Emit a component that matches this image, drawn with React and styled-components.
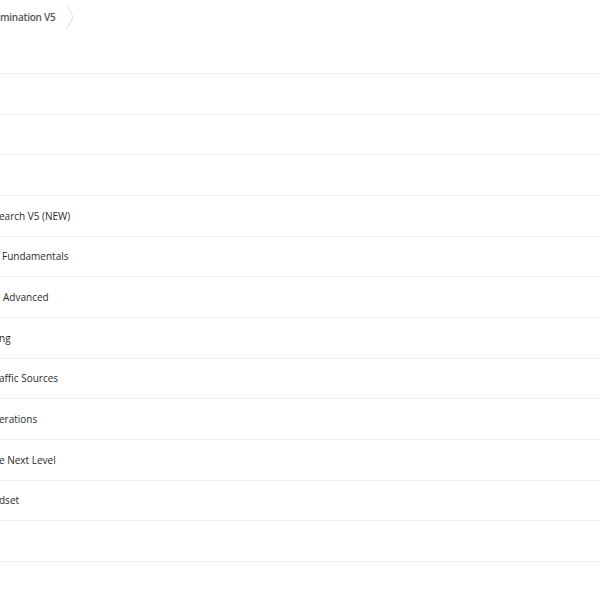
import React from 'react';
import styled, { createGlobalStyle } from 'styled-components'

const Global = createGlobalStyle`
body {
  margin: 0;
  background: #fff;
  font-family: "Open Sans", "Liberation Sans", sans-serif;
}
`

const Page = styled.div`
width: 600px;
height: 600px;
overflow: hidden;
background: #fff;
`

const Header = styled.header`
height: 73px;
display: flex;
align-items: flex-start;
`

const Crumb = styled.div`
display: flex;
align-items: center;
height: 34px;
gap: 11px;
font-size: 10px;
font-weight: 600;
letter-spacing: -0.25px;
color: #555;
`

const Chevron = styled.svg`
width: 8px;
height: 26px;
margin-top: -1px;
`

const List = styled.ul`
list-style: none;
margin: 0;
padding: 0;
border-bottom: 1px solid #ededed;
`

const Row = styled.li`
box-sizing: border-box;
height: 40.67px;
border-top: 1px solid #ededed;
display: flex;
align-items: center;
font-size: 10px;
color: #2a2a2a;
`

const Label = styled.span`
margin-left: ${props => props.shift}px;
white-space: pre;
`

const rows = [
    { text: '', shift: 0 },
    { text: '', shift: 0 },
    { text: '', shift: 0 },
    { text: 'earch V5 (NEW)', shift: -1 },
    { text: 'Fundamentals', shift: 2 },
    { text: 'Advanced', shift: 3 },
    { text: 'ng', shift: -1 },
    { text: 'affic Sources', shift: -1 },
    { text: 'erations', shift: -1 },
    { text: 'e Next Level', shift: -1 },
    { text: 'dset', shift: -1 },
    { text: '', shift: 0 },
]

export default function App() {
    return (
        <Page>
            <Global />
            <Header>
                <Crumb>
                    <span>mination V5</span>
                    <Chevron viewBox="0 0 8 26">
                        <path d="M1 1 L7 13 L1 25" fill="none" stroke="#dcdcdc" strokeWidth="1" />
                    </Chevron>
                </Crumb>
            </Header>
            <List>
                {rows.map((r, i) => (
                    <Row key={i}>
                        <Label shift={r.shift}>{r.text}</Label>
                    </Row>
                ))}
            </List>
        </Page>
    )
}
